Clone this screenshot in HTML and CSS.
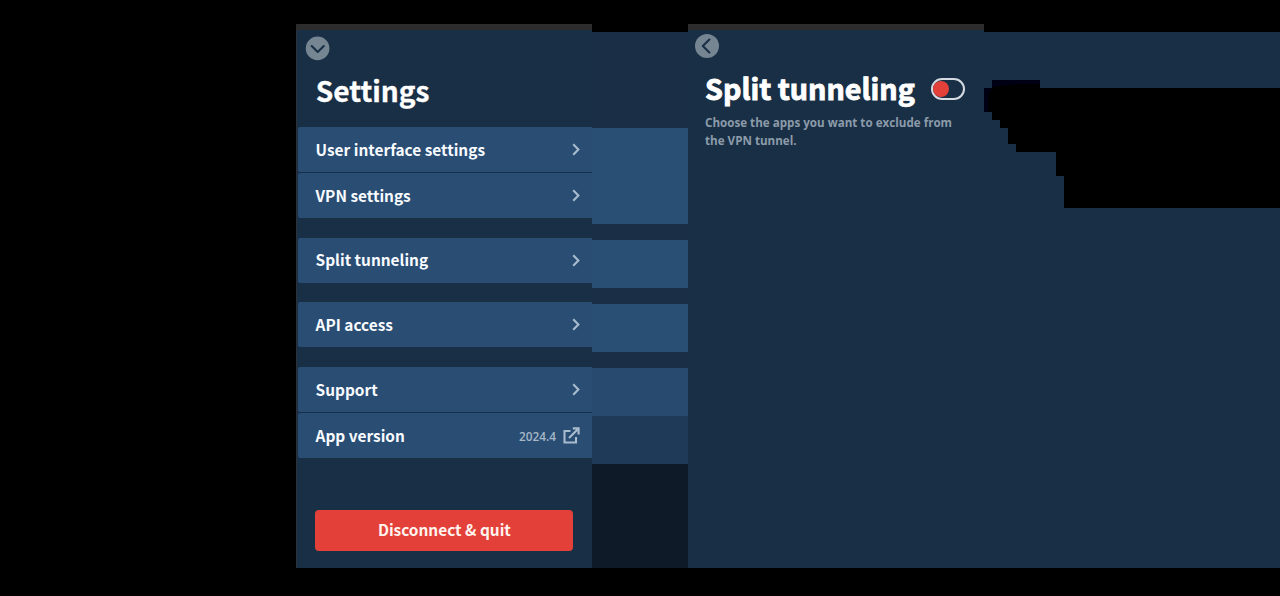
FILE: index.html
```html
<!DOCTYPE html>
<html lang="en">
<head>
<meta charset="utf-8">
<title>Settings</title>
<link rel="stylesheet" href="styles.css">
</head>
<body>
<main class="stage">
  <section class="panel settings">
    <div class="titlebar"></div>
    <button class="round close" aria-label="Close"><svg width="24" height="24" viewBox="0 0 24 24"><circle cx="11.6" cy="12.4" r="11.8"/><path d="M5.7 10.1 11.7 16l6.1-5.9"/></svg></button>
    <h1 class="title">Settings</h1>
    <nav class="menu">
      <div class="group">
        <a class="row"><span class="label">User interface settings</span><svg class="chev" width="8" height="13" viewBox="0 0 8 13"><path d="M1.2 1.2 6.4 6.5 1.2 11.8"/></svg></a>
        <a class="row"><span class="label">VPN settings</span><svg class="chev" width="8" height="13" viewBox="0 0 8 13"><path d="M1.2 1.2 6.4 6.5 1.2 11.8"/></svg></a>
      </div>
      <div class="group">
        <a class="row"><span class="label">Split tunneling</span><svg class="chev" width="8" height="13" viewBox="0 0 8 13"><path d="M1.2 1.2 6.4 6.5 1.2 11.8"/></svg></a>
      </div>
      <div class="group">
        <a class="row"><span class="label">API access</span><svg class="chev" width="8" height="13" viewBox="0 0 8 13"><path d="M1.2 1.2 6.4 6.5 1.2 11.8"/></svg></a>
      </div>
      <div class="group">
        <a class="row"><span class="label">Support</span><svg class="chev" width="8" height="13" viewBox="0 0 8 13"><path d="M1.2 1.2 6.4 6.5 1.2 11.8"/></svg></a>
        <a class="row"><span class="label">App version</span><span class="version">2024.4</span><svg class="ext" width="17" height="17" viewBox="0 0 17 17"><path d="M7.5 4H1.5v11.5H13V10M9.8 1.4h5.8v6M15.3 1.7 6 11"/></svg></a>
      </div>
    </nav>
    <button class="quit">Disconnect &amp; quit</button>
  </section>
  <div class="strip">
    <i class="base h96"></i><i class="blue h96"></i><i class="base h16"></i><i class="blue h48"></i><i class="base h16"></i><i class="blue h48"></i><i class="base h16"></i><i class="dim h48"></i><i class="faint h48"></i><i class="deep"></i>
  </div>
  <section class="panel split">
    <div class="titlebar short"></div>
    <div class="split-body">
      <button class="round back" aria-label="Back"><svg width="24" height="24" viewBox="0 0 24 24"><circle cx="12" cy="12" r="12"/><path d="M14.4 5.6 7.8 12l6.6 6.4"/></svg></button>
      <div class="heading"><h1 class="title wide">Split tunneling</h1><span class="switch"><span class="knob"></span></span></div>
      <p class="hint">Choose the apps you want to exclude from<br>the VPN tunnel.</p>
    </div>
    <svg class="cutout" width="296" height="128" viewBox="0 0 296 128"><path fill="#000015" d="M8 0h48v8H8zM0 8h8v24H0z"/><path d="M34 4h22v4h240v120H80V96h-8V72H32v-8h-8V48h-8v-8H8v-8H4V14L9 7z"/></svg>
  </section>
</main>
</body>
</html>
```
FILE: styles.css
```css
* { box-sizing: border-box; }
body { margin: 0; background: #000; overflow: hidden; }
button { border: 0; padding: 0; background: none; }
.stage { display: flex; width: 1280px; height: 596px; padding: 24px 0 28px 296px; }
.panel { height: 544px; display: flex; flex-direction: column; position: relative; }
.titlebar { height: 6px; flex: none; background: #2c2c2c; }
.settings { width: 296px; background: #192f45; border-left: 1px solid #2b3039; align-items: stretch; }
.settings .titlebar { margin-left: -1px; }
.round { width: 24px; height: 24px; }
.round svg { display: block; overflow: visible; }
.round circle { fill: #758592; }
.round path { fill: none; stroke: #192f45; stroke-width: 2.1; stroke-linecap: round; stroke-linejoin: round; }
.close { margin: 6px 0 0 9px; }
.title { margin: 0; color: #fff; font: 700 28.1px/40px "Noto Sans CJK JP", sans-serif; white-space: nowrap; -webkit-text-stroke: 0.3px #fff; }
.settings .title { margin: 10px 0 0 18.7px; height: 40px; }
.wide { font-size: 28.7px; -webkit-text-stroke: 0.9px #fff; }
.menu { display: flex; flex-direction: column; gap: 19.7px; margin-top: 17px; }
.group { display: flex; flex-direction: column; gap: 1px; margin-left: 1px; }
.row { height: 45px; display: flex; align-items: center; padding: 0 12px 0 17.6px; background: #294d73; border-radius: 2px 0 0 2px; }
.label { flex: 1; color: #f8fbff; font: 700 15.4px/24px "Noto Sans CJK JP", sans-serif; white-space: nowrap; padding-bottom: 2px; }
.chev, .ext { flex: none; fill: none; stroke: #a9bccd; stroke-width: 2.1; }
.version { color: #a5b6c7; font: 600 11.8px/16px "Open Sans", sans-serif; margin-right: 7px; }
.quit { width: 258px; height: 41px; flex: none; margin: 51.8px 0 0 18.4px; padding-bottom: 2px; border-radius: 4px; background: #e34039; color: #fff3ee; font: 700 15.4px/24px "Noto Sans CJK JP", sans-serif; }
.strip { width: 96px; height: 536px; margin-top: 8px; display: flex; flex-direction: column; }
.h96 { height: 96px; }
.h48 { height: 48px; }
.h16 { height: 16px; }
.base { background: #1a2e45; }
.blue { background: #294f75; }
.dim { background: #294a6f; }
.faint { background: #1f3a58; }
.deep { flex: 1; background: #0e1a27; }
.split { width: 592px; }
.short { width: 296px; }
.split-body { flex: 1; padding: 4px 0 0 17px; background: linear-gradient(#192f45, #192f45) 0 2px no-repeat; }
.split::before { content: ""; position: absolute; left: 0; top: 6px; width: 296px; height: 2px; background: #192f45; }
.back { display: block; margin-left: -10px; position: relative; }
.heading { display: flex; align-items: center; gap: 16.2px; height: 40px; margin-top: 11px; }
.heading .title { padding-bottom: 2px; }
.switch { width: 34px; height: 22px; border: 2px solid #d5dbe2; border-radius: 11px; padding: 1px 0 1px 0.5px; }
.knob { display: block; width: 16px; height: 16px; border-radius: 50%; background: #e34039; }
.hint { margin: 5px 0 0; color: #8c9baa; font: 700 11.63px/18px "Open Sans", sans-serif; }
.cutout { position: absolute; left: 296px; top: 56px; }
```
